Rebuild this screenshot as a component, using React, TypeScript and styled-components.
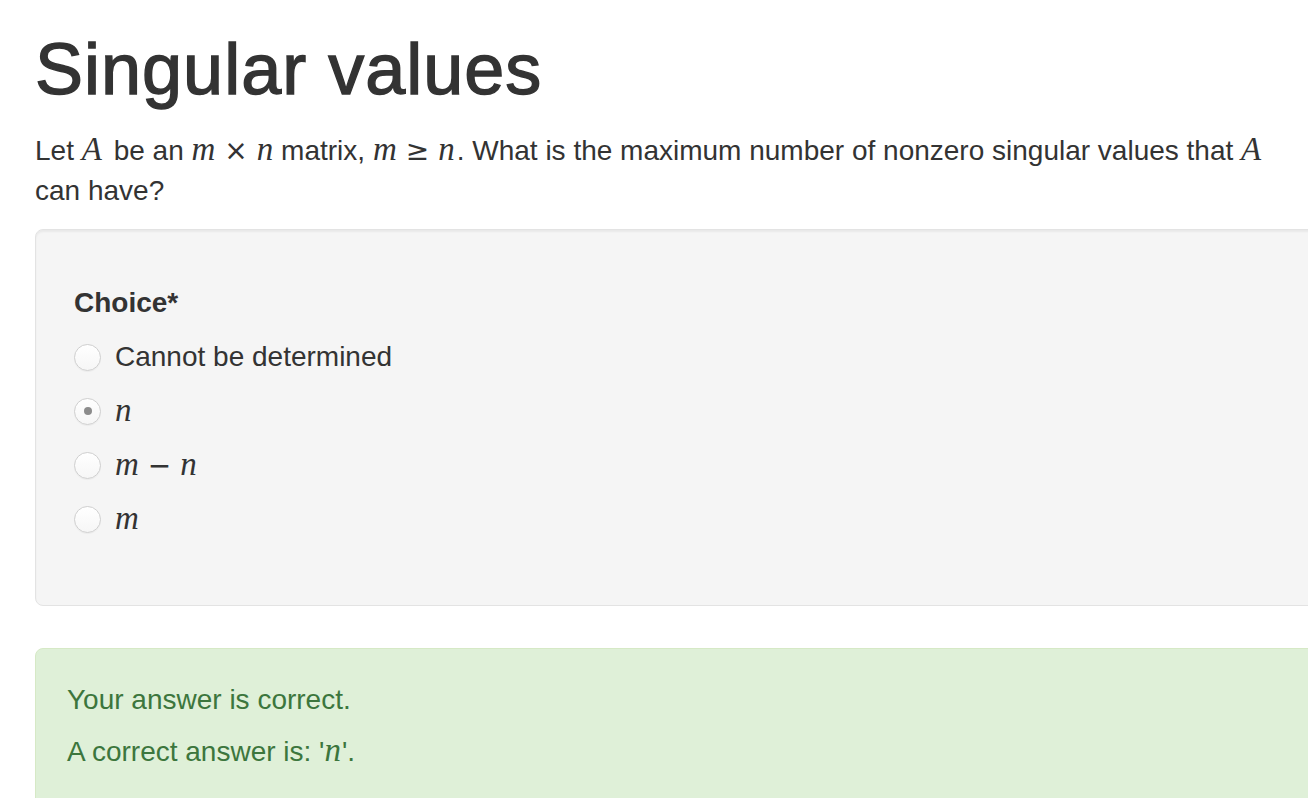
import React from 'react'
import styled, { createGlobalStyle } from 'styled-components'

const GlobalStyle = createGlobalStyle`
    html, body {
        margin: 0;
        padding: 0;
        overflow: hidden;
        background: #fff;
    }
    body {
        font-family: "Liberation Sans", Arial, Helvetica, sans-serif;
        font-size: 28px;
        line-height: 40px;
        color: #333;
    }
`

const Page = styled.div`
    width: 1300px;
    padding: 30px 0 0 35px;
`

const Title = styled.h1`
    font-size: 72px;
    font-weight: 500;
    line-height: 79px;
    letter-spacing: 1px;
    -webkit-text-stroke: 1.4px #333;
    margin: 0 0 20px 0;
    color: #333;
`

const Question = styled.p`
    max-width: 1255px;
    margin: 0 0 18px 0;
`

// inline math, a stand-in for the MathJax output
const M = styled.span<{ after?: number }>`
    font-family: "Liberation Serif", "Times New Roman", serif;
    font-style: italic;
    font-size: 33px;
    margin-right: ${(p) => p.after ?? 0}px;
`

const Op = styled.span`
    font-family: "DejaVu Sans", "Liberation Sans", sans-serif;
    font-size: 28px;
    margin: 0 9px;
`

const Well = styled.div`
    min-height: 40px;
    padding: 53px 38px 66px 38px;
    background: #f5f5f5;
    border: 1px solid #e3e3e3;
    border-radius: 8px;
    box-shadow: inset 0 2px 2px rgba(0, 0, 0, 0.05);
    margin-bottom: 42px;
`

const FieldLabel = styled.div`
    font-weight: bold;
    margin-bottom: 14px;
`

const Options = styled.div`
    display: flex;
    flex-direction: column;
    gap: 14px;
`

const OptionRow = styled.label`
    display: flex;
    align-items: center;
    height: 40px;
    gap: 14px;
    cursor: pointer;
`

const Radio = styled.span<{ checked?: boolean }>`
    width: 25px;
    height: 25px;
    border-radius: 50%;
    border: 1px solid #cfcfcf;
    background: linear-gradient(#ffffff, #f6f6f6);
    box-shadow: 0 1px 1px rgba(0, 0, 0, 0.04);
    display: flex;
    align-items: center;
    justify-content: center;
    flex-shrink: 0;

    &::after {
        content: '';
        display: ${(p) => (p.checked ? 'block' : 'none')};
        width: 8px;
        height: 8px;
        border-radius: 50%;
        background: #8c8c8c;
    }
`

const Alert = styled.div`
    padding: 31px 30px 40px 31px;
    background: #dff0d8;
    border: 1px solid #d6e9c6;
    border-radius: 8px;
    color: #3c763d;
`

const AlertLine = styled.p`
    margin: 0 0 10px 0;
`

const options = [
    { id: 'a', label: <>Cannot be determined</> },
    { id: 'b', label: <M>n</M>, checked: true },
    { id: 'c', label: <><M>m</M><Op>−</Op><M>n</M></> },
    { id: 'd', label: <M>m</M> },
]

export default function App() {
    return (
        <>
            <GlobalStyle />
            <Page>
                <Title>Singular values</Title>
                <Question>
                    Let <M after={4}>A</M> be an <M>m</M><Op>×</Op><M>n</M> matrix, <M>m</M><Op>≥</Op><M after={2}>n</M>. What
                    is the maximum number of nonzero singular values that <M>A</M> can have?
                </Question>

                <Well>
                    <FieldLabel>Choice*</FieldLabel>
                    <Options>
                        {options.map((o) => (
                            <OptionRow key={o.id}>
                                <Radio checked={o.checked} />
                                <span>{o.label}</span>
                            </OptionRow>
                        ))}
                    </Options>
                </Well>

                <Alert>
                    <AlertLine>Your answer is correct.</AlertLine>
                    <AlertLine>
                        A correct answer is: '<M after={1}>n</M>'.
                    </AlertLine>
                </Alert>
            </Page>
        </>
    )
}
